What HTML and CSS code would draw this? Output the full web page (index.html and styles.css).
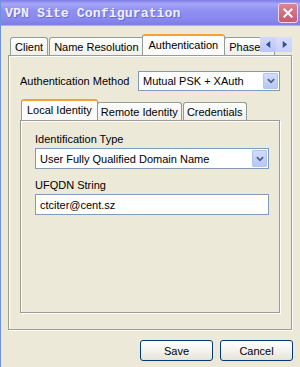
FILE: index.html
```html
<!DOCTYPE html>
<html lang="en">
<head>
    <meta charset="UTF-8">
    <title>VPN Site Configuration</title>
    <link rel="stylesheet" href="styles.css">
</head>
<body>
    <div class="window">
        <div class="titlebar">
            <span class="title">VPN Site Configuration</span>
            <button class="close" aria-label="Close">
                <svg viewBox="0 0 20 20">
                    <line x1="6" y1="6" x2="14" y2="14"/>
                    <line x1="14" y1="6" x2="6" y2="14"/>
                </svg>
            </button>
        </div>

        <div class="body">
            <div class="tabs">
                <div class="tab">Client</div>
                <div class="tab">Name Resolution</div>
                <div class="tab active">Authentication</div>
                <div class="tab">Phase 1</div>
                <div class="tab-scroll">
                    <span class="arrow">
                        <svg viewBox="0 0 8 8"><polygon points="6,0 6,8 1,4"/></svg>
                    </span>
                    <span class="arrow">
                        <svg viewBox="0 0 8 8"><polygon points="2,0 2,8 7,4"/></svg>
                    </span>
                </div>
            </div>

            <div class="panel">
                <div class="field-row">
                    <span class="label">Authentication Method</span>
                    <div class="select method">
                        <span class="value">Mutual PSK + XAuth</span>
                        <span class="drop">
                            <svg viewBox="0 0 9 6"><polyline points="1,1 4.5,4.5 8,1"/></svg>
                        </span>
                    </div>
                </div>

                <div class="tabs sub">
                    <div class="tab active">Local Identity</div>
                    <div class="tab">Remote Identity</div>
                    <div class="tab">Credentials</div>
                </div>

                <div class="panel inner">
                    <span class="label">Identification Type</span>
                    <div class="select">
                        <span class="value">User Fully Qualified Domain Name</span>
                        <span class="drop">
                            <svg viewBox="0 0 9 6"><polyline points="1,1 4.5,4.5 8,1"/></svg>
                        </span>
                    </div>
                    <span class="label">UFQDN String</span>
                    <div class="input">ctciter@cent.sz</div>
                </div>
            </div>

            <div class="buttons">
                <button class="btn">Save</button>
                <button class="btn">Cancel</button>
            </div>
        </div>
    </div>
</body>
</html>
```

FILE: styles.css
```css
* {
    box-sizing: border-box;
}
body {
    margin: 0;
    font-family: 'Liberation Sans', Arial, sans-serif;
    font-size: 11px;
    color: #000;
    background: #ece9d8;
}
.window {
    width: 300px;
    height: 367px;
    display: flex;
    flex-direction: column;
    background: #ece9d8;
    border-left: 1px solid #6f92e0;
    overflow: hidden;
}
.titlebar {
    height: 26px;
    margin-left: -1px;
    display: flex;
    align-items: center;
    justify-content: space-between;
    padding: 0 2px 0 5px;
    background: linear-gradient(to bottom, #7c7ce6 0, #a6a6f8 4px, #9090f2 10px, #8787ee 20px, #7c7ce2 25px, #dcdcf0 26px);
}
.title {
    font-family: 'Liberation Mono', monospace;
    font-weight: bold;
    font-size: 13.3px;
    color: #eef0ff;
    text-shadow: 1px 1px 0 #6a6ad0;
    margin-top: 1px;
}
.close {
    width: 20px;
    height: 20px;
    padding: 0;
    border: 1px solid #f2d6e2;
    border-radius: 3px;
    background: linear-gradient(to bottom, #dc8494, #c65a70);
    display: flex;
    align-items: center;
    justify-content: center;
}
.close svg {
    width: 18px;
    height: 18px;
    stroke: #fff;
    stroke-width: 2.2;
    stroke-linecap: square;
}
.body {
    flex: 1;
    padding: 8px 8px 0 7px;
}

/* tab strips */
.tabs {
    position: relative;
    display: flex;
    align-items: flex-end;
    height: 21px;
    padding-left: 2px;
    overflow: hidden;
}
.tab {
    height: 18px;
    padding: 0 4px;
    margin-right: 1px;
    display: flex;
    align-items: center;
    white-space: nowrap;
    border: 1px solid #919b9c;
    border-bottom: none;
    border-radius: 3px 3px 0 0;
    background: linear-gradient(to bottom, #fff, #f1f0ea);
}
.tab.active {
    position: relative;
    z-index: 1;
    height: 22px;
    margin: 0 -1px -1px -3px;
    padding: 0 6px 2px 6px;
    border-top: 2px solid #f3a23a;
    background: #fcfcfe;
}
.tab-scroll {
    position: absolute;
    right: 0;
    top: 3px;
    display: flex;
    width: 32px;
    height: 15px;
    z-index: 2;
}
.arrow {
    flex: 1;
    display: flex;
    align-items: center;
    justify-content: center;
    background: linear-gradient(to bottom, #d2d8fb, #bcc6f5);
}
.arrow + .arrow {
    background: linear-gradient(to bottom, #d8defc, #c8d0f8);
}
.arrow svg {
    width: 7px;
    height: 7px;
    fill: #2d4f9a;
}

/* panels */
.panel {
    height: 275px;
    padding: 15px 11px 0 11px;
    border: 1px solid #9d9b90;
    box-shadow: inset 1px 1px 0 #fff, 1px 1px 0 #fff;
}
.field-row {
    display: flex;
    align-items: center;
    justify-content: space-between;
    height: 20px;
    margin-bottom: 8px;
}
.label {
    display: block;
}
.select {
    position: relative;
    height: 21px;
    display: flex;
    align-items: center;
    padding-left: 4px;
    background: #fff;
    border: 1px solid #7f9db9;
}
.select.method {
    width: 142px;
    height: 20px;
}
.drop {
    position: absolute;
    right: 1px;
    top: 1px;
    bottom: 1px;
    width: 15px;
    display: flex;
    align-items: center;
    justify-content: center;
    border-radius: 1px;
    background: linear-gradient(to bottom, #d0dcfb, #b6c8f6);
    border: 1px solid #b4c4f0;
}
.drop svg {
    width: 8px;
    height: 6px;
    fill: none;
    stroke: #4d6185;
    stroke-width: 2;
}
.tabs.sub {
    padding-left: 3px;
}
.tabs.sub .tab {
    padding: 0 3px;
}
.tabs.sub .tab.active {
    margin-left: -2px;
    padding: 0 5px 2px 5px;
}
.panel.inner {
    height: 193px;
    padding: 12px 10px 0 14px;
}
.panel.inner .label {
    margin-bottom: 3px;
}
.panel.inner .select {
    margin-bottom: 10px;
}
.input {
    height: 21px;
    display: flex;
    align-items: center;
    padding-left: 4px;
    background: #fff;
    border: 1px solid #7f9db9;
}

/* buttons */
.buttons {
    display: flex;
    justify-content: flex-end;
    gap: 7px;
    margin-top: 10px;
    margin-right: -1px;
}
.btn {
    width: 73px;
    height: 21px;
    padding: 0;
    font-family: inherit;
    font-size: 11px;
    color: #000;
    border: 1px solid #003c74;
    border-radius: 3px;
    background: linear-gradient(to bottom, #fff 0, #f4f3ee 50%, #e6e3d6 100%);
}
```
